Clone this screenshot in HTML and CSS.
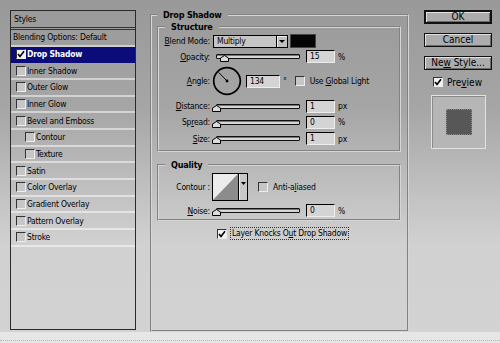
FILE: index.html
```html
<!DOCTYPE html>
<html lang="en">
<head>
    <meta charset="UTF-8">
    <title>Layer Style</title>
    <link rel="stylesheet" href="styles.css">
</head>
<body>
    <div class="dialog">
        <div class="main">
            <div class="styles-panel">
                <div class="styles-head">Styles</div>
                <div class="style-row plain">Blending Options: Default</div>
                <div class="style-row active">
                    <span class="cb checked"><svg width="8" height="8" viewBox="0 0 8 8"><path d="M1 4 L3 6.5 L7 1.2" fill="none" stroke="#000" stroke-width="1.6"/></svg></span>Drop Shadow
                </div>
                <div class="style-row"><span class="cb"></span>Inner Shadow</div>
                <div class="style-row"><span class="cb"></span>Outer Glow</div>
                <div class="style-row"><span class="cb"></span>Inner Glow</div>
                <div class="style-row"><span class="cb"></span>Bevel and Emboss</div>
                <div class="style-row sub"><span class="cb"></span>Contour</div>
                <div class="style-row sub"><span class="cb"></span>Texture</div>
                <div class="style-row"><span class="cb"></span>Satin</div>
                <div class="style-row"><span class="cb"></span>Color Overlay</div>
                <div class="style-row"><span class="cb"></span>Gradient Overlay</div>
                <div class="style-row"><span class="cb"></span>Pattern Overlay</div>
                <div class="style-row"><span class="cb"></span>Stroke</div>
            </div>

            <fieldset class="group outer">
                <legend>Drop Shadow</legend>

                <fieldset class="group structure">
                    <legend>Structure</legend>
                    <div class="row h-blend">
                        <span class="lbl"><u>B</u>lend Mode:</span>
                        <div class="select">Multiply<span class="drop"><span class="arrow"></span></span></div>
                        <div class="swatch"></div>
                    </div>
                    <div class="row h-opacity">
                        <span class="lbl"><u>O</u>pacity:</span>
                        <div class="slider"><div class="track"></div><svg class="thumb" style="left: 8.1px" width="9" height="7" viewBox="0 0 9 7"><path d="M0.5 6.5 V3 L4.5 0.5 L8.5 3 V6.5 Z" fill="#dcdcdc" stroke="#000"/></svg></div>
                        <div class="num">15</div>
                        <span class="unit">%</span>
                    </div>
                    <div class="row h-angle">
                        <span class="lbl"><u>A</u>ngle:</span>
                        <svg class="dial" width="30" height="30" viewBox="0 0 30 30">
                            <circle cx="15" cy="15" r="13.3" fill="none" stroke="#000" stroke-width="1.7"/>
                            <line x1="15" y1="15" x2="6.7" y2="6.4" stroke="#000" stroke-width="1"/>
                            <circle cx="15" cy="15" r="1.4" fill="#000"/>
                        </svg>
                        <div class="num wide">134</div>
                        <span class="deg">°</span>
                        <span class="cb global"></span>
                        <span class="cb-text">Use <u>G</u>lobal Light</span>
                    </div>
                    <div class="row h-dist">
                        <span class="lbl"><u>D</u>istance:</span>
                        <div class="slider"><div class="track"></div><svg class="thumb" style="left: -0.5px" width="9" height="7" viewBox="0 0 9 7"><path d="M0.5 6.5 V3 L4.5 0.5 L8.5 3 V6.5 Z" fill="#dcdcdc" stroke="#000"/></svg></div>
                        <div class="num">1</div>
                        <span class="unit">px</span>
                    </div>
                    <div class="row h-spread">
                        <span class="lbl">Sp<u>r</u>ead:</span>
                        <div class="slider"><div class="track"></div><svg class="thumb" style="left: -0.5px" width="9" height="7" viewBox="0 0 9 7"><path d="M0.5 6.5 V3 L4.5 0.5 L8.5 3 V6.5 Z" fill="#dcdcdc" stroke="#000"/></svg></div>
                        <div class="num">0</div>
                        <span class="unit">%</span>
                    </div>
                    <div class="row h-size">
                        <span class="lbl"><u>S</u>ize:</span>
                        <div class="slider"><div class="track"></div><svg class="thumb" style="left: -0.5px" width="9" height="7" viewBox="0 0 9 7"><path d="M0.5 6.5 V3 L4.5 0.5 L8.5 3 V6.5 Z" fill="#dcdcdc" stroke="#000"/></svg></div>
                        <div class="num">1</div>
                        <span class="unit">px</span>
                    </div>
                </fieldset>

                <fieldset class="group quality">
                    <legend>Quality</legend>
                    <div class="row h-contour">
                        <span class="lbl">Contour :</span>
                        <svg class="contour" width="36" height="28" viewBox="0 0 36 28">
                            <rect x="0.5" y="0.5" width="35" height="27" fill="#c8c8c8" stroke="#000"/>
                            <polygon points="1,1 26,1 1,27" fill="#ececec"/>
                            <polygon points="26,1 26,27 1,27" fill="#8c8c8c"/>
                            <line x1="26.5" y1="1" x2="26.5" y2="27" stroke="#000"/>
                            <line x1="27.5" y1="1" x2="27.5" y2="27" stroke="#eee"/>
                            <polygon points="29,9 34,9 31.5,12" fill="#000"/>
                        </svg>
                        <span class="cb aa"></span>
                        <span class="cb-text">Anti-a<u>l</u>iased</span>
                    </div>
                    <div class="row h-noise">
                        <span class="lbl"><u>N</u>oise:</span>
                        <div class="slider"><div class="track"></div><svg class="thumb" style="left: -0.5px" width="9" height="7" viewBox="0 0 9 7"><path d="M0.5 6.5 V3 L4.5 0.5 L8.5 3 V6.5 Z" fill="#dcdcdc" stroke="#000"/></svg></div>
                        <div class="num">0</div>
                        <span class="unit">%</span>
                    </div>
                </fieldset>

                <div class="knockout">
                    <span class="cb checked"><svg width="8" height="8" viewBox="0 0 8 8"><path d="M1 4 L3 6.5 L7 1.2" fill="none" stroke="#000" stroke-width="1.6"/></svg></span>
                    <span class="focus">Layer Knocks O<u>u</u>t Drop Shadow</span>
                </div>
            </fieldset>

            <div class="side">
                <div class="btn default">OK</div>
                <div class="btn">Cancel</div>
                <div class="btn">Ne<u>w</u> Style...</div>
                <div class="preview-row">
                    <span class="cb checked"><svg width="8" height="8" viewBox="0 0 8 8"><path d="M1 4 L3 6.5 L7 1.2" fill="none" stroke="#000" stroke-width="1.6"/></svg></span>
                    <span>Pre<u>v</u>iew</span>
                </div>
                <div class="preview-box">
                    <div class="preview-swatch"></div>
                </div>
            </div>
        </div>
        <div class="footer"><div class="footer-line"></div></div>
    </div>
</body>
</html>
```

FILE: styles.css
```css
* {
    margin: 0;
    padding: 0;
    box-sizing: border-box;
}

body {
    width: 500px;
    height: 343px;
    overflow: hidden;
    font-family: "DejaVu Sans", "Liberation Sans", Arial, sans-serif;
    font-stretch: condensed;
    font-size: 8.5px;
    letter-spacing: -0.2px;
    color: #000;
    background: linear-gradient(#999 0, #a6a6a6 110px, #c2c2c2 195px, #d1d1d1 245px, #d3d3d3 100%);
}

u {
    text-decoration: underline;
    text-underline-offset: 1px;
}

.dialog {
    display: flex;
    flex-direction: column;
    height: 343px;
}

.main {
    display: flex;
    height: 332px;
    padding-left: 10px;
}

/* styles list */
.styles-panel {
    width: 126px;
    height: 320px;
    margin-top: 10px;
    border: 1px solid #2a2a2a;
    display: flex;
    flex-direction: column;
}

.styles-head {
    height: 19px;
    line-height: 16px;
    padding-left: 3px;
    border-bottom: 3px double #333;
}

.style-row {
    height: 16.67px;
    display: flex;
    align-items: center;
    padding-left: 5px;
    border-bottom: 2px solid rgba(255,255,255,0.5);
}

.style-row.plain {
    padding-left: 2px;
}

.style-row.sub {
    padding-left: 14px;
}

.style-row.active {
    background: #0b0b7a;
    color: #fff;
    font-weight: bold;
    border-bottom-color: #0b0b7a;
}

.cb {
    width: 10px;
    height: 10px;
    flex: none;
    display: inline-flex;
    align-items: center;
    justify-content: center;
    border: 1px solid;
    border-color: #333 #eee #eee #333;
    background: #c6c6c6;
    margin-right: 1px;
}

.cb.checked {
    background: #f2f2f2;
}

/* groups */
.group {
    border: 2px groove #d6d6d6;
    min-width: 0;
}

.group legend {
    font-weight: bold;
    font-size: 9px;
    line-height: 12px;
    padding: 0 6px;
    margin-left: 6px;
}

.outer {
    width: 259px;
    height: 323px;
    margin: 9px 0 0 14px;
    padding: 0 6px 0 5px;
}

.outer > legend {
    margin-left: 0;
}

.structure {
    padding-bottom: 3px;
}

.quality {
    margin-top: 7px;
}

.row {
    display: flex;
    align-items: center;
}

.h-blend { height: 16px; }
.h-opacity { height: 15px; }
.h-angle { height: 34px; }
.h-dist { height: 16px; }
.h-spread { height: 16px; }
.h-size { height: 17px; }
.h-contour { height: 31px; }
.h-noise { height: 17px; }

.lbl {
    width: 51px;
    flex: none;
    text-align: right;
}

.select {
    width: 75px;
    height: 13px;
    margin-left: 3px;
    display: flex;
    align-items: center;
    padding-left: 3px;
    border: 1px solid #000;
    background: #c6c6c6;
}

.drop {
    margin-left: auto;
    width: 11px;
    height: 11px;
    display: flex;
    align-items: center;
    justify-content: center;
    background: #c0c0c0;
    border-left: 1px solid #000;
    box-shadow: inset 1px 1px 0 #eee;
}

.arrow {
    border-left: 3px solid transparent;
    border-right: 3px solid transparent;
    border-top: 3px solid #000;
}

.swatch {
    width: 26px;
    height: 14px;
    margin-left: 2px;
    background: #050505;
    border: 1px solid #444;
}

.slider {
    position: relative;
    width: 88px;
    height: 13px;
    margin-left: 2px;
    padding: 4px 0 0 4px;
}

.track {
    width: 84px;
    height: 5px;
    border: 1px solid #111;
    border-radius: 1px;
    background: #d6d6d6;
    box-shadow: inset 0 1px 0 #777;
}

.thumb {
    position: absolute;
    top: 5px;
}

.num {
    width: 29px;
    height: 13px;
    margin-left: 6px;
    padding-left: 3px;
    line-height: 11px;
    border: 1px solid;
    border-color: #000 #eee #eee #000;
    background: #d4d4d4;
}

.num.wide {
    width: 34px;
    margin-left: 4px;
}

.unit {
    margin-left: 3px;
}

.dial {
    margin-left: 2px;
    flex: none;
}

.deg {
    margin-left: 3px;
}

.cb.global {
    margin-left: 8px;
}

.cb-text {
    margin-left: 4px;
}

.contour {
    margin-left: 2px;
    flex: none;
}

.cb.aa {
    margin-left: 10px;
}

.knockout {
    display: flex;
    align-items: center;
    margin: 6px 0 0 60px;
    height: 13px;
}

.focus {
    margin-left: 2px;
    padding: 0 1px;
    border: 1px dotted #333;
    line-height: 11px;
}

/* right column */
.side {
    width: 68px;
    margin: 10px 0 0 15px;
    display: flex;
    flex-direction: column;
    font-size: 10px;
    letter-spacing: 0;
}

.btn {
    height: 14px;
    line-height: 12px;
    text-align: center;
    border: 1px solid #111;
    background: #acacac;
    box-shadow: inset 1px 1px 0 #e2e2e2, inset -1px -1px 0 #6a6a6a;
    margin-bottom: 9px;
}

.btn.default {
    border-width: 2px;
    line-height: 10px;
}

.btn + .btn + .btn {
    margin-bottom: 7px;
}

.preview-row {
    display: flex;
    align-items: center;
    margin-left: 9px;
    height: 10px;
}

.preview-row .cb {
    margin-right: 4px;
}

.preview-box {
    width: 55px;
    height: 54px;
    margin: 8px 0 0 7px;
    display: flex;
    align-items: center;
    justify-content: center;
    border: 1px solid #e2e2e2;
    box-shadow: inset 1px 1px 0 #8a8a8a;
    background: #b6b6b6;
}

.preview-swatch {
    width: 26px;
    height: 26px;
    background: #575757;
    border: 1px dotted #8a8a8a;
}

.footer {
    height: 11px;
    background: #e6e6e6;
    padding-top: 8px;
}

.footer-line {
    border-top: 1px dotted #b4b4b4;
}
```
